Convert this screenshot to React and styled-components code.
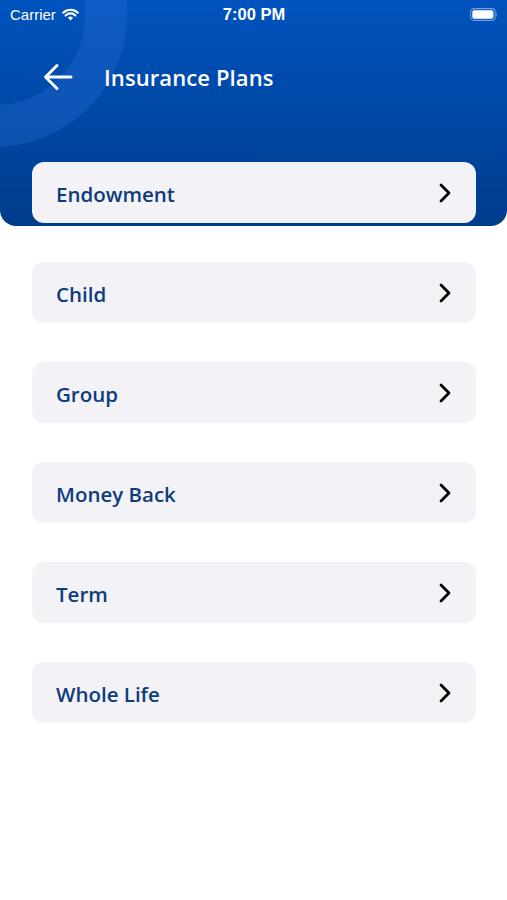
import React from "react";
import styled, { createGlobalStyle } from "styled-components";

const GlobalStyle = createGlobalStyle`
  html, body {
    margin: 0;
    padding: 0;
    background: #ffffff;
  }
  body {
    font-family: "Open Sans", "Noto Sans", sans-serif;
  }
`;

const Page = styled.div`
  width: 507px;
  min-height: 900px;
  background: #ffffff;
`;

const Header = styled.div`
  position: relative;
  overflow: hidden;
  height: 226px;
  border-radius: 0 0 16px 16px;
  background: linear-gradient(180deg, #0053be 0%, #0049a8 45%, #003c8c 100%);
`;

// decorative ring in the top left corner, drawn over the gradient
const Ring = styled.div`
  position: absolute;
  left: -137px;
  top: -117px;
  width: 180px;
  height: 180px;
  border-radius: 50%;
  border: 42px solid rgba(45, 115, 220, 0.28);
  pointer-events: none;
`;

const StatusBar = styled.div`
  position: relative;
  height: 28px;
  padding: 0 9px 0 10px;
  display: grid;
  grid-template-columns: 1fr auto 1fr;
  align-items: center;
  color: #ffffff;
  font-family: "Liberation Sans", Arial, sans-serif;
`;

const Carrier = styled.div`
  display: flex;
  align-items: center;
  gap: 6px;
  font-size: 15px;
`;

const Clock = styled.div`
  font-size: 16.5px;
  font-weight: 700;
`;

const Battery = styled.div`
  justify-self: end;
  display: flex;
  align-items: center;
`;

const NavRow = styled.div`
  position: relative;
  display: flex;
  align-items: center;
  gap: 30px;
  padding: 33px 0 0 42px;
  height: 32px;
`;

const BackButton = styled.button`
  display: flex;
  align-items: center;
  justify-content: center;
  padding: 0;
  border: none;
  background: none;
  cursor: pointer;
`;

const Title = styled.h1`
  margin: 0;
  color: #ffffff;
  font-size: 22px;
  font-weight: 600;
  letter-spacing: 0.1px;
`;

const List = styled.div`
  display: flex;
  flex-direction: column;
  gap: 39px;
  padding: 0 31px 0 32px;
  margin-top: -64px;
  position: relative;
`;

const PlanItem = styled.div`
  height: 61px;
  display: flex;
  align-items: center;
  justify-content: space-between;
  padding: 0 24px 0 24px;
  border-radius: 12px;
  background: #f2f2f7;
  cursor: pointer;
`;

const PlanName = styled.span`
  color: #0e3c7c;
  font-size: 20.5px;
  font-weight: 600;
  margin-top: 2px;
`;

const WifiIcon = () => (
  <svg width="17" height="13" viewBox="0 0 17 13">
    <path d="M8.5 12.6 L5.9 9.8 A3.8 3.8 0 0 1 11.1 9.8 Z" fill="#fff" />
    <path
      d="M3.6 7.4 A7 7 0 0 1 13.4 7.4"
      stroke="#fff"
      strokeWidth="2.1"
      fill="none"
      strokeLinecap="round"
    />
    <path
      d="M1.2 4.7 A10.6 10.6 0 0 1 15.8 4.7"
      stroke="#fff"
      strokeWidth="2.1"
      fill="none"
      strokeLinecap="round"
    />
  </svg>
);

const BatteryIcon = () => (
  <svg width="28" height="13" viewBox="0 0 28 13">
    <rect x="0.6" y="0.6" width="24.5" height="11.8" rx="3.4" fill="none" stroke="rgba(255,255,255,0.45)" strokeWidth="1.1" />
    <rect x="2.3" y="2.3" width="21.1" height="8.4" rx="1.8" fill="#fff" />
    <path d="M26.3 4.4 C27.3 4.7 27.3 8.3 26.3 8.6 Z" fill="rgba(255,255,255,0.45)" />
  </svg>
);

const BackArrow = () => (
  <svg width="32" height="30" viewBox="0 0 32 30">
    <path
      d="M29 15 H4 M15 3.5 L3.5 15 L15 26.5"
      stroke="#fff"
      strokeWidth="3"
      fill="none"
      strokeLinecap="round"
      strokeLinejoin="round"
    />
  </svg>
);

const Chevron = () => (
  <svg width="14" height="22" viewBox="0 0 14 22">
    <path
      d="M3 3 L11 11 L3 19"
      stroke="#000"
      strokeWidth="2.8"
      fill="none"
      strokeLinecap="round"
      strokeLinejoin="round"
    />
  </svg>
);

const plans = ["Endowment", "Child", "Group", "Money Back", "Term", "Whole Life"];

export default function App() {
  return (
    <Page>
      <GlobalStyle />
      <Header>
        <Ring />
        <StatusBar>
          <Carrier>
            Carrier
            <WifiIcon />
          </Carrier>
          <Clock>7:00 PM</Clock>
          <Battery>
            <BatteryIcon />
          </Battery>
        </StatusBar>
        <NavRow>
          <BackButton aria-label="Back">
            <BackArrow />
          </BackButton>
          <Title>Insurance Plans</Title>
        </NavRow>
      </Header>
      <List>
        {plans.map(name => (
          <PlanItem key={name}>
            <PlanName>{name}</PlanName>
            <Chevron />
          </PlanItem>
        ))}
      </List>
    </Page>
  );
}
